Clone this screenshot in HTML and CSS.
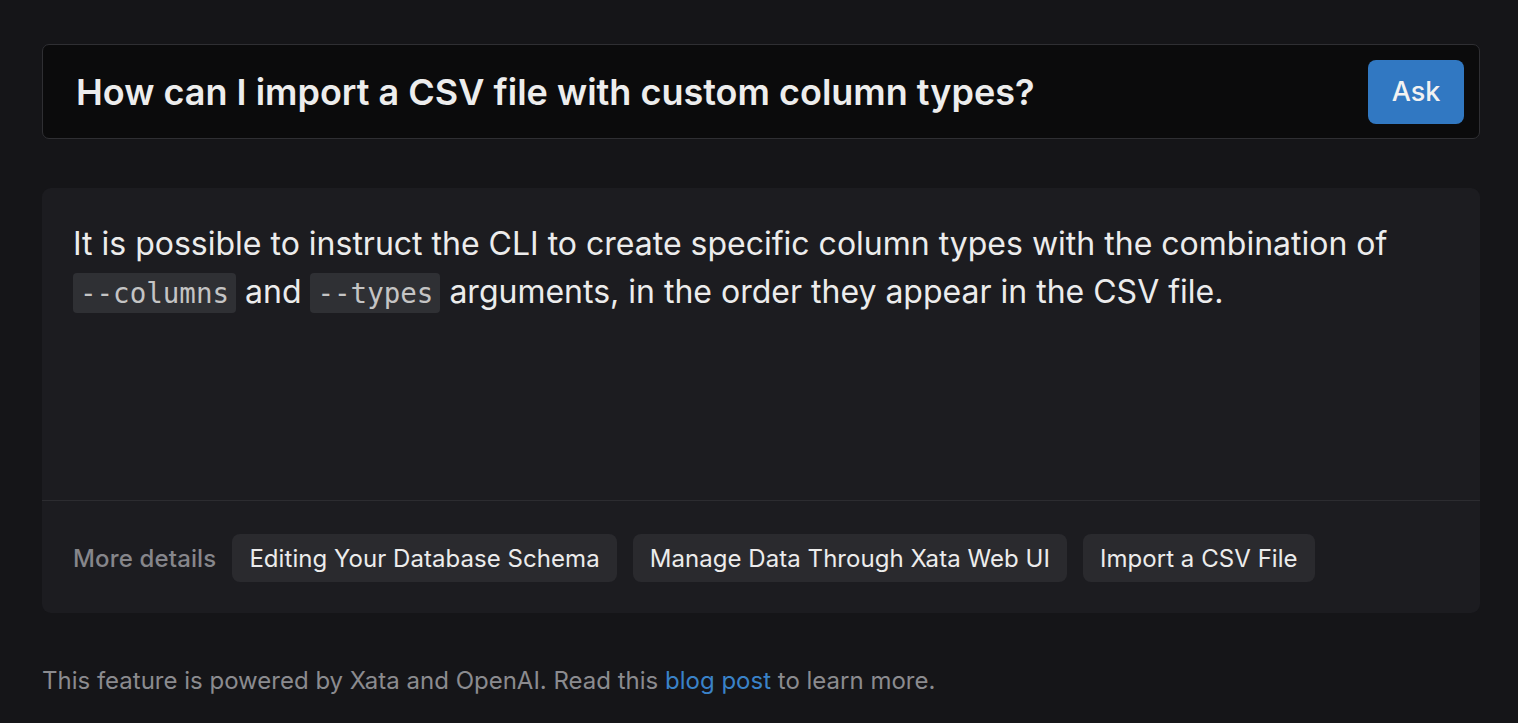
FILE: index.html
```html
<!DOCTYPE html>
<html lang="en">
<head>
<meta charset="utf-8">
<link rel="stylesheet" href="styles.css">
</head>
<body>
<main class="page">
  <form class="ask-bar">
    <div class="question">How can I import a CSV file with custom column types?</div>
    <button type="button" class="ask-btn">Ask</button>
  </form>
  <section class="answer">
    <div class="answer-body">
      <p>It is possible to instruct the CLI to create specific column types with the combination of <code>--columns</code> and <code>--types</code> arguments, in the order they appear in the CSV file.</p>
    </div>
    <div class="answer-footer">
      <span class="more-label">More details</span>
      <a class="chip">Editing Your Database Schema</a>
      <a class="chip">Manage Data Through Xata Web UI</a>
      <a class="chip">Import a CSV File</a>
    </div>
  </section>
  <p class="note">This feature is powered by Xata and OpenAI. Read this <a class="link">blog post</a> to learn more.</p>
</main>
</body>
</html>
```
FILE: styles.css
```css
html, body {
  margin: 0;
  padding: 0;
  background: #151518;
}
body {
  font-family: Inter, "Noto Sans", sans-serif;
  color: #ededed;
}
.page {
  padding: 44px 38px 0 42px;
  display: flex;
  flex-direction: column;
}
.ask-bar {
  margin: 0;
  height: 95px;
  box-sizing: border-box;
  display: flex;
  align-items: center;
  justify-content: space-between;
  background: #0b0b0c;
  border: 1px solid #2f2f33;
  border-radius: 7px;
  padding: 0 15px 0 33px;
}
.question {
  font-size: 36px;
  font-weight: 600;
  color: #ededed;
}
.ask-btn {
  width: 96px;
  height: 64px;
  border: none;
  border-radius: 8px;
  background: #3178c2;
  color: #f2f2f2;
  font-family: Inter, sans-serif;
  font-size: 27px;
  font-weight: 500;
  cursor: pointer;
}
.answer {
  margin-top: 49px;
  background: #1c1c20;
  border-radius: 9px;
  display: flex;
  flex-direction: column;
}
.answer-body {
  height: 313px;
  box-sizing: border-box;
  padding: 32px 31px 0 31px;
  border-bottom: 1px solid #2c2c30;
}
.answer-body p {
  margin: 0;
  font-size: 32px;
  line-height: 48px;
  color: #ececec;
}
code {
  font-family: "DejaVu Sans Mono", monospace;
  font-size: 27.5px;
  white-space: nowrap;
  background: #2f3034;
  color: #c4c4c4;
  border-radius: 4px;
  padding: 4px 7px;
}
.answer-footer {
  display: flex;
  align-items: center;
  gap: 16px;
  padding: 33px 31px 31px 31px;
}
.more-label {
  font-size: 24px;
  font-weight: 500;
  letter-spacing: 0.15px;
  color: #86868b;
}
.chip {
  display: inline-flex;
  align-items: center;
  height: 48px;
  padding: 0 17px;
  border-radius: 8px;
  background: #2a2a2e;
  color: #ececec;
  font-size: 24px;
  font-weight: 400;
  letter-spacing: 0.05px;
}
.note {
  margin: 53px 0 0 0;
  font-size: 24px;
  color: #8b8b8f;
}
.link {
  color: #3a82c8;
}
```
